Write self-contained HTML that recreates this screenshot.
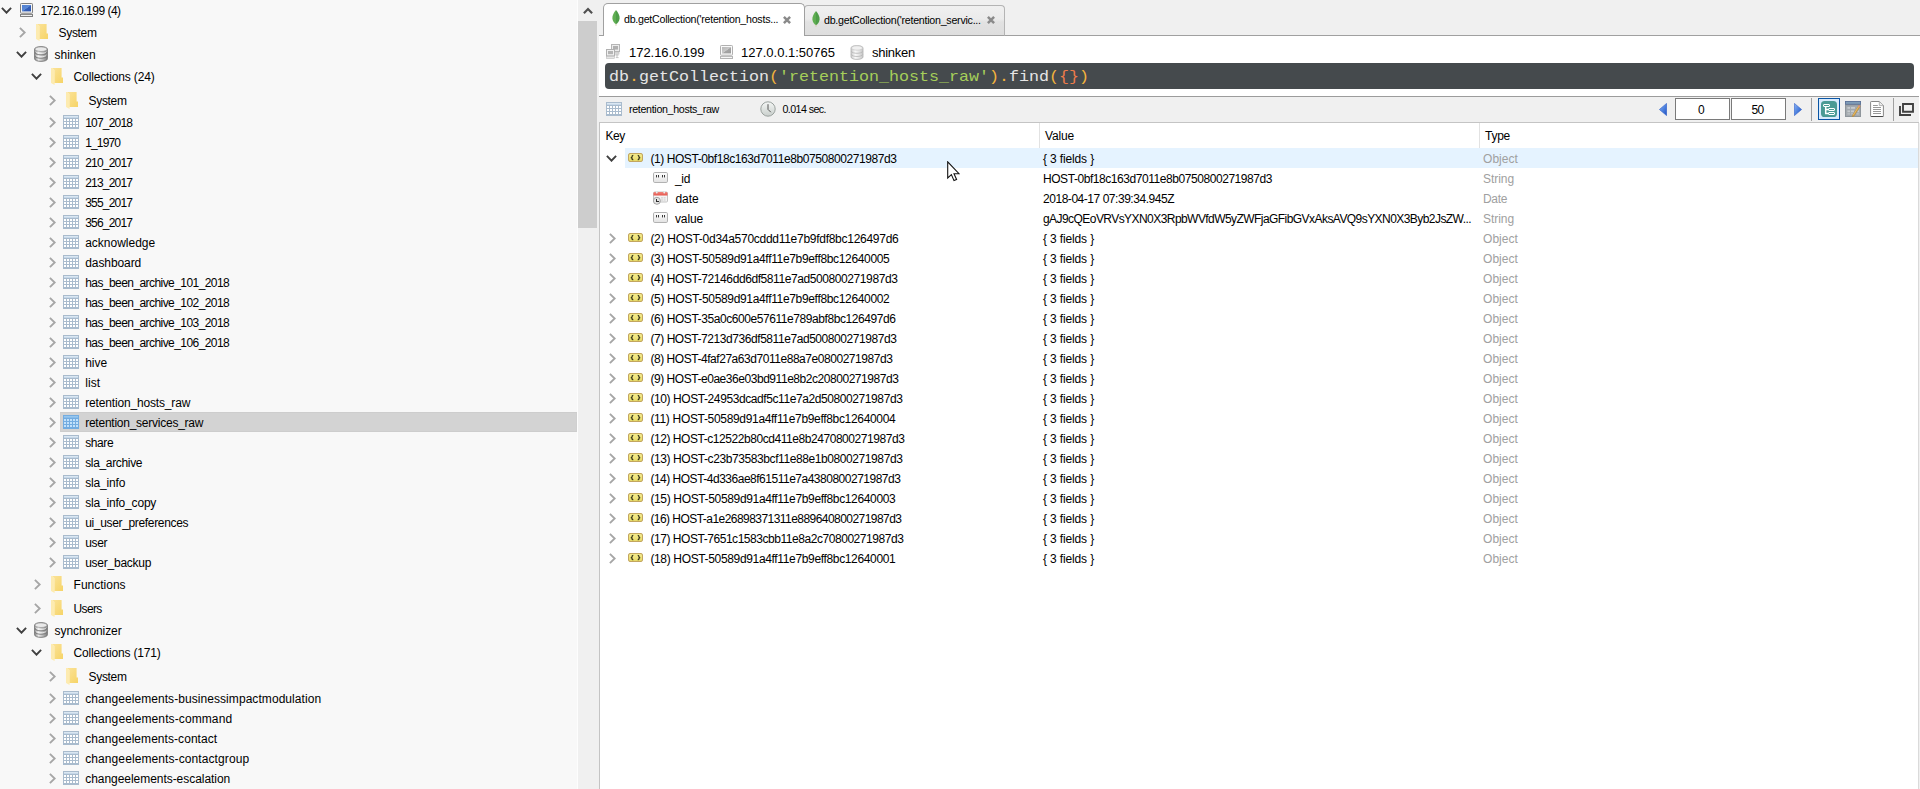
<!DOCTYPE html>
<html><head><meta charset="utf-8"><title>Robo 3T</title>
<style>
html,body{margin:0;padding:0;}
body{width:1920px;height:789px;overflow:hidden;position:relative;background:#fff;font-family:"Liberation Sans",sans-serif;}
.t{position:absolute;white-space:pre;line-height:20px;height:20px;font-family:"Liberation Sans",sans-serif;}
.m{font-family:"Liberation Mono",monospace;}
.b{position:absolute;box-sizing:border-box;}
.i{position:absolute;overflow:visible;}
</style></head><body>

<svg width="0" height="0" style="position:absolute">
<defs>
<linearGradient id="gFold" x1="0" y1="0" x2="1" y2="1"><stop offset="0" stop-color="#fbe39a"/><stop offset="1" stop-color="#f6d467"/></linearGradient>
<linearGradient id="gDb" x1="0" y1="0" x2="1" y2="0"><stop offset="0" stop-color="#7e7e7e"/><stop offset="0.3" stop-color="#ececec"/><stop offset="0.65" stop-color="#b8b8b8"/><stop offset="1" stop-color="#787878"/></linearGradient>
<linearGradient id="gDbL" x1="0" y1="0" x2="1" y2="0"><stop offset="0" stop-color="#c8c8c8"/><stop offset="0.35" stop-color="#fafafa"/><stop offset="0.7" stop-color="#e2e2e2"/><stop offset="1" stop-color="#c4c4c4"/></linearGradient>
<linearGradient id="gScr" x1="0" y1="0" x2="1" y2="1"><stop offset="0" stop-color="#4f7fd0"/><stop offset="0.5" stop-color="#5c8ad6"/><stop offset="0.55" stop-color="#3560b8"/><stop offset="1" stop-color="#2c55ad"/></linearGradient>
<linearGradient id="gScrG" x1="0" y1="0" x2="1" y2="1"><stop offset="0" stop-color="#b8b8b8"/><stop offset="0.5" stop-color="#c8c8c8"/><stop offset="0.55" stop-color="#a4a4a4"/><stop offset="1" stop-color="#9c9c9c"/></linearGradient>
<linearGradient id="gLeaf" x1="0" y1="0" x2="1" y2="0"><stop offset="0" stop-color="#62b052"/><stop offset="0.48" stop-color="#5cab50"/><stop offset="0.52" stop-color="#4c9c47"/><stop offset="1" stop-color="#4fa049"/></linearGradient>
<linearGradient id="gObj" x1="0" y1="0" x2="0" y2="1"><stop offset="0" stop-color="#f3ea8c"/><stop offset="0.5" stop-color="#efe47c"/><stop offset="1" stop-color="#e6d862"/></linearGradient>
<linearGradient id="gStr" x1="0" y1="0" x2="0" y2="1"><stop offset="0" stop-color="#ffffff"/><stop offset="1" stop-color="#e2e2e2"/></linearGradient>
<linearGradient id="gTri" x1="0" y1="0" x2="1" y2="1"><stop offset="0" stop-color="#8db4f2"/><stop offset="0.5" stop-color="#4f83e0"/><stop offset="1" stop-color="#1f4fc0"/></linearGradient>
<linearGradient id="gRed" x1="0" y1="0" x2="0" y2="1"><stop offset="0" stop-color="#f2857c"/><stop offset="1" stop-color="#e6544b"/></linearGradient>
<linearGradient id="gClk" x1="0" y1="0" x2="0" y2="1"><stop offset="0" stop-color="#f4f6f5"/><stop offset="1" stop-color="#c9cfcc"/></linearGradient>

<symbol id="chd" viewBox="0 0 11 7"><path d="M0.9,0.9 L5.5,5.7 L10.1,0.9" fill="none" stroke="#404040" stroke-width="1.9"/></symbol>
<symbol id="chr" viewBox="0 0 7 11"><path d="M0.9,0.9 L5.7,5.5 L0.9,10.1" fill="none" stroke="#a6a6a6" stroke-width="1.9"/></symbol>

<symbol id="comp" viewBox="0 0 13 14">
<rect x="0.5" y="0.5" width="12" height="9.7" rx="0.8" fill="#f6f6f6" stroke="#7e7e7e"/>
<rect x="2" y="2" width="9" height="6.4" fill="url(#gScr)"/>
<rect x="0.5" y="11.4" width="12" height="2.1" fill="#f0f0f0" stroke="#7e7e7e"/>
</symbol>
<symbol id="compg" viewBox="0 0 13 14">
<rect x="0.5" y="0.5" width="12" height="9.7" rx="0.8" fill="#fafafa" stroke="#b0b0b0"/>
<rect x="2" y="2" width="9" height="6.4" fill="url(#gScrG)"/>
<rect x="0.5" y="11.4" width="12" height="2.1" fill="#f6f6f6" stroke="#b4b4b4"/>
</symbol>

<symbol id="db" viewBox="0 0 14 16">
<path d="M0.6,3.2 C0.6,-0.2 13.4,-0.2 13.4,3.2 L13.4,12.8 C13.4,16.2 0.6,16.2 0.6,12.8 Z" fill="url(#gDb)" stroke="#777" stroke-width="0.9"/>
<ellipse cx="7" cy="3.2" rx="6" ry="2.3" fill="#e9e9e9" stroke="#8a8a8a" stroke-width="0.6"/>
<path d="M0.8,6.6 C2,9.6 12,9.6 13.2,6.6" fill="none" stroke="#7a7a7a" stroke-width="0.9"/>
<path d="M0.8,10 C2,13 12,13 13.2,10" fill="none" stroke="#7a7a7a" stroke-width="0.9"/>
<path d="M1.6,5.6 C3,8 11,8 12.4,5.6" fill="none" stroke="#fafafa" stroke-width="0.8" opacity="0.9"/>
<path d="M1.6,9 C3,11.4 11,11.4 12.4,9" fill="none" stroke="#fafafa" stroke-width="0.8" opacity="0.9"/>
</symbol>
<symbol id="dbl" viewBox="0 0 14 16">
<path d="M0.6,3.2 C0.6,-0.2 13.4,-0.2 13.4,3.2 L13.4,12.8 C13.4,16.2 0.6,16.2 0.6,12.8 Z" fill="url(#gDbL)" stroke="#b4b4b4" stroke-width="0.9"/>
<ellipse cx="7" cy="3.2" rx="6" ry="2.3" fill="#f0f0f0" stroke="#c0c0c0" stroke-width="0.6"/>
<path d="M0.8,6.6 C2,9.6 12,9.6 13.2,6.6" fill="none" stroke="#b8b8b8" stroke-width="0.9"/>
<path d="M0.8,10 C2,13 12,13 13.2,10" fill="none" stroke="#b8b8b8" stroke-width="0.9"/>
</symbol>

<symbol id="fold" viewBox="0 0 12 17">
<path d="M0.6,0 L9.4,0 L9.4,0 L10.6,0 L10.6,9.4 L12,9.4 L12,15 L3.2,15 L3.2,2 Z" fill="url(#gFold)"/>
<path d="M0,0 L0.8,0 L3.6,1.9 L3.6,17 L0,15 Z" fill="#fdebb0"/>
</symbol>

<symbol id="tbl" viewBox="0 0 16 14">
<rect x="0" y="0" width="16" height="14" fill="#a9bbcd"/>
<rect x="1" y="1" width="14" height="1" fill="#dbe7f2"/>
<rect x="1" y="2" width="14" height="1" fill="#c6d8e9"/>
<g fill="#fff">
<rect x="1" y="4" width="2" height="2"/><rect x="4" y="4" width="2" height="2"/><rect x="7" y="4" width="2" height="2"/><rect x="10" y="4" width="2" height="2"/><rect x="13" y="4" width="2" height="2"/>
<rect x="1" y="7" width="2" height="2"/><rect x="4" y="7" width="2" height="2"/><rect x="7" y="7" width="2" height="2"/><rect x="10" y="7" width="2" height="2"/><rect x="13" y="7" width="2" height="2"/>
<rect x="1" y="10" width="2" height="2"/><rect x="4" y="10" width="2" height="2"/><rect x="7" y="10" width="2" height="2"/><rect x="10" y="10" width="2" height="2"/><rect x="13" y="10" width="2" height="2"/>
</g>
</symbol>
<symbol id="tbls" viewBox="0 0 16 14">
<rect x="0" y="0" width="16" height="14" fill="#73ace0"/>
<rect x="1" y="1" width="14" height="1" fill="#97c6ee"/>
<rect x="1" y="2" width="14" height="1" fill="#88bce9"/>
<g fill="#c2e1fb">
<rect x="1" y="4" width="2" height="2"/><rect x="4" y="4" width="2" height="2"/><rect x="7" y="4" width="2" height="2"/><rect x="10" y="4" width="2" height="2"/><rect x="13" y="4" width="2" height="2"/>
<rect x="1" y="7" width="2" height="2"/><rect x="4" y="7" width="2" height="2"/><rect x="7" y="7" width="2" height="2"/><rect x="10" y="7" width="2" height="2"/><rect x="13" y="7" width="2" height="2"/>
<rect x="1" y="10" width="2" height="2"/><rect x="4" y="10" width="2" height="2"/><rect x="7" y="10" width="2" height="2"/><rect x="10" y="10" width="2" height="2"/><rect x="13" y="10" width="2" height="2"/>
</g>
</symbol>

<symbol id="leaf" viewBox="0 0 8 16">
<path d="M4,0 C6.2,2.8 8,5.4 7.6,8.8 C7.2,11.8 5.4,13.4 4,14.2 C2.6,13.4 0.8,11.8 0.4,8.8 C0,5.4 1.8,2.8 4,0 Z" fill="url(#gLeaf)"/>
<rect x="3.6" y="13.6" width="0.8" height="2.2" fill="#cfc3a4"/>
</symbol>

<symbol id="cls" viewBox="0 0 8 8"><path d="M0.9,0.9 L7.1,7.1 M7.1,0.9 L0.9,7.1" stroke="#8a8a8a" stroke-width="2.5" fill="none"/></symbol>

<symbol id="obj" viewBox="0 0 15 9">
<path d="M1.3,0.5 L13.7,0.5 L13.7,1.4 L14.5,1.4 L14.5,7.6 L13.7,7.6 L13.7,8.5 L1.3,8.5 L1.3,7.6 L0.5,7.6 L0.5,1.4 L1.3,1.4 Z" fill="url(#gObj)" stroke="#c3a660"/>
<path d="M5.3,2.5 Q4.1,2.4 4.1,3.3 L4.1,3.7 Q4.1,4.5 2.8,4.6 Q4.1,4.7 4.1,5.5 L4.1,5.9 Q4.1,6.8 5.3,6.7" fill="none" stroke="#39381a" stroke-width="1.25"/>
<path d="M9.7,2.5 Q10.9,2.4 10.9,3.3 L10.9,3.7 Q10.9,4.5 12.2,4.6 Q10.9,4.7 10.9,5.5 L10.9,5.9 Q10.9,6.8 9.7,6.7" fill="none" stroke="#39381a" stroke-width="1.25"/>
</symbol>

<symbol id="str" viewBox="0 0 15 11">
<rect x="0.5" y="0.5" width="14" height="10" rx="1.3" fill="url(#gStr)" stroke="#b2b2b2"/>
<g fill="#3a3a3a"><rect x="3" y="3" width="1" height="2.4"/><rect x="5" y="3" width="1" height="2.4"/><rect x="9" y="3" width="1" height="2.4"/><rect x="11" y="3" width="1" height="2.4"/></g>
</symbol>

<symbol id="dat" viewBox="0 0 15 14">
<rect x="0.5" y="1" width="14" height="10" rx="1" fill="#f4f4f4" stroke="#c4c4c4"/>
<path d="M0.5,4.6 L0.5,2.2 Q0.5,1 1.7,1 L13.3,1 Q14.5,1 14.5,2.2 L14.5,4.6 Z" fill="url(#gRed)"/>
<rect x="3" y="0" width="1.6" height="2.4" rx="0.8" fill="#fafafa" stroke="#c8c8c8" stroke-width="0.4"/>
<rect x="10.4" y="0" width="1.6" height="2.4" rx="0.8" fill="#fafafa" stroke="#c8c8c8" stroke-width="0.4"/>
<g fill="#dadada"><rect x="8" y="6" width="2" height="1.6"/><rect x="10.6" y="6" width="2" height="1.6"/><rect x="8" y="8.2" width="2" height="1.6"/><rect x="10.6" y="8.2" width="2" height="1.6"/></g>
<circle cx="3.9" cy="9.8" r="3.5" fill="#e4e4e4" stroke="#9c9c9c" stroke-width="0.9"/>
<rect x="3" y="8" width="1" height="3" fill="#2c2c2c"/><rect x="3" y="10" width="3" height="1" fill="#2c2c2c"/>
</symbol>

<symbol id="clk" viewBox="0 0 16 16">
<circle cx="8" cy="8" r="7.2" fill="url(#gClk)" stroke="#9aa19e" stroke-width="1"/>
<path d="M8,3.2 L8,8.4 L10.8,11.2" fill="none" stroke="#555" stroke-width="1"/>
</symbol>

<symbol id="conn" viewBox="0 0 14 15">
<rect x="5.5" y="0.5" width="8" height="7" fill="#ececec" stroke="#b6b6b6"/>
<rect x="7" y="2" width="5" height="3.6" fill="#b0b0b0"/>
<rect x="6" y="8.5" width="7" height="1.6" fill="#e2e2e2" stroke="#bcbcbc" stroke-width="0.6"/>
<rect x="0.5" y="5.5" width="8" height="6.4" fill="#f0f0f0" stroke="#b0b0b0"/>
<rect x="2" y="7" width="5" height="3.2" fill="#b4b4b4"/>
<rect x="0.5" y="12.6" width="8" height="1.8" fill="#e6e6e6" stroke="#bcbcbc" stroke-width="0.6"/>
<path d="M9.4,11 L12.6,11 M11,9.6 L11,13.6 M9.8,13.6 L12.6,13.6" stroke="#c4c4c4" stroke-width="1" fill="none"/>
</symbol>

<symbol id="tril" viewBox="0 0 8 13"><path d="M7.6,0.4 L7.6,12.6 L0.4,6.5 Z" fill="url(#gTri)" stroke="#2c5cc8" stroke-width="0.6"/></symbol>
<symbol id="trir" viewBox="0 0 8 13"><path d="M0.4,0.4 L0.4,12.6 L7.6,6.5 Z" fill="url(#gTri)" stroke="#2c5cc8" stroke-width="0.6"/></symbol>

<symbol id="tree" viewBox="0 0 16 16">
<rect x="0" y="0" width="16" height="16" rx="3.6" fill="#4a9a95"/>
<g fill="none" stroke="#fff" stroke-width="1">
<rect x="2.5" y="3.5" width="6" height="2" rx="0.5"/>
<rect x="7.5" y="7.5" width="6" height="2" rx="0.5"/>
<rect x="7.5" y="11.5" width="6" height="2" rx="0.5"/>
</g>
<path d="M4.7,6 L4.7,12.6 L7.2,12.6 M4.7,8.5 L7.2,8.5" fill="none" stroke="#fff" stroke-width="1.5"/>
</symbol>

<symbol id="tedit" viewBox="0 0 16 16">
<rect x="0" y="0" width="16" height="16" fill="#8f969c"/>
<rect x="0" y="0" width="16" height="3.6" fill="#5b7096"/>
<rect x="0.8" y="0.8" width="14.4" height="2" fill="#7f9db8"/>
<rect x="1" y="4.4" width="14" height="10.6" fill="#a3a9ae"/>
<g fill="#c6cace"><rect x="2.4" y="6" width="2.6" height="1.8"/><rect x="6" y="6" width="4" height="1.8"/><rect x="2.4" y="9.4" width="2.6" height="1.8"/><rect x="6" y="9.4" width="3" height="1.8"/><rect x="2.4" y="12.4" width="2.6" height="1"/><rect x="6" y="12.4" width="2" height="1"/><rect x="11.4" y="12.4" width="2.4" height="1"/><rect x="12.4" y="9.4" width="1.6" height="1.8"/></g>
<path d="M13.9,4.3 L15.3,5.3 L9,15 L7.4,15.9 L7.7,14 Z" fill="#d9a440" stroke="#a87a30" stroke-width="0.4"/>
<path d="M14.2,4.6 L8.2,14.2" stroke="#f0cc7c" stroke-width="0.6" fill="none"/>
<path d="M13.9,4.3 L15.3,5.3 L14.6,6.4 L13.2,5.4 Z" fill="#e08a86"/>
</symbol>

<symbol id="doc" viewBox="0 0 14 16">
<path d="M0.6,1.2 Q0.6,0.5 1.3,0.5 L9.3,0.5 L13.4,4.6 L13.4,14.8 Q13.4,15.5 12.7,15.5 L1.3,15.5 Q0.6,15.5 0.6,14.8 Z" fill="#fff" stroke="#7a7a7a" stroke-width="0.9"/>
<path d="M0.8,15 Q1,15.6 1.6,15.6 L12.4,15.6 Q13.2,15.6 13.3,15" fill="none" stroke="#3c3c3c" stroke-width="0.9"/>
<path d="M9.3,0.8 L9.3,4.6 L13.2,4.6" fill="#ececec" stroke="#9a9a9a" stroke-width="0.7"/>
<g stroke="#8c8c8c" stroke-width="0.9"><path d="M3,4.5 L7.8,4.5 M3,6.5 L11,6.5 M3,8.5 L11,8.5 M3,10.5 L11,10.5 M3,12.5 L11,12.5"/></g>
</symbol>

<symbol id="win" viewBox="0 0 16 13">
<path d="M4,1 L14,1 L14,8.8 L4,8.8 Z" fill="none" stroke="#404040" stroke-width="1.9"/>
<path d="M1,3 L1,12 L12,12" fill="none" stroke="#404040" stroke-width="1.9"/>
</symbol>

<symbol id="cur" viewBox="0 0 13 21"><path d="M0.7,0.8 L0.7,17 L4.4,13.6 L7,19.6 L9.6,18.5 L7,12.7 L12,12.7 Z" fill="#fff" stroke="#111" stroke-width="1.1" stroke-linejoin="miter"/></symbol>
</defs></svg>

<div class="b" style="left:0px;top:0px;width:578px;height:789px;background:#f8f8f8;"></div>
<div class="b" style="left:577px;top:0px;width:1px;height:789px;background:#fdfdfd;"></div>
<div class="b" style="left:578px;top:0px;width:19px;height:789px;background:#f0f0f0;"></div>
<div class="b" style="left:578px;top:21px;width:19px;height:207px;background:#cdcdcd;"></div>
<svg class="i" style="left:582.5px;top:6.6px" width="10" height="8" viewBox="0 0 10 8"><path d="M0.9,6.3 L5,2 L9.1,6.3" fill="none" stroke="#505050" stroke-width="2.1"/></svg>
<div class="b" style="left:597px;top:0px;width:2px;height:789px;background:#f0f0f0;"></div>
<svg class="i" style="left:1px;top:6.8px" width="11" height="7" ><use href="#chd"/></svg>
<svg class="i" style="left:20px;top:3px" width="13" height="14" ><use href="#comp"/></svg>
<div class="t " style="left:40.60px;top:0.54px;font-size:12px;letter-spacing:-0.504px;color:#000;">172.16.0.199 (4)</div>
<svg class="i" style="left:19px;top:26.9px" width="7" height="11" ><use href="#chr"/></svg>
<svg class="i" style="left:36px;top:23.8px" width="12" height="17" ><use href="#fold"/></svg>
<div class="t " style="left:58.60px;top:22.54px;font-size:12px;letter-spacing:-0.334px;color:#000;">System</div>
<svg class="i" style="left:16px;top:50.8px" width="11" height="7" ><use href="#chd"/></svg>
<svg class="i" style="left:34px;top:45.8px" width="14" height="16" ><use href="#db"/></svg>
<div class="t " style="left:54.60px;top:44.54px;font-size:12px;letter-spacing:-0.051px;color:#000;">shinken</div>
<svg class="i" style="left:31px;top:72.8px" width="11" height="7" ><use href="#chd"/></svg>
<svg class="i" style="left:51px;top:67.8px" width="12" height="17" ><use href="#fold"/></svg>
<div class="t " style="left:73.60px;top:66.54px;font-size:12px;letter-spacing:-0.148px;color:#000;">Collections (24)</div>
<svg class="i" style="left:49px;top:94.9px" width="7" height="11" ><use href="#chr"/></svg>
<svg class="i" style="left:66px;top:91.8px" width="12" height="17" ><use href="#fold"/></svg>
<div class="t " style="left:88.60px;top:90.54px;font-size:12px;letter-spacing:-0.334px;color:#000;">System</div>
<svg class="i" style="left:49px;top:116.9px" width="7" height="11" ><use href="#chr"/></svg>
<svg class="i" style="left:63px;top:115px" width="16" height="14" ><use href="#tbl"/></svg>
<div class="t " style="left:85.20px;top:112.54px;font-size:12px;letter-spacing:-0.798px;color:#000;">107_2018</div>
<svg class="i" style="left:49px;top:136.9px" width="7" height="11" ><use href="#chr"/></svg>
<svg class="i" style="left:63px;top:135px" width="16" height="14" ><use href="#tbl"/></svg>
<div class="t " style="left:85.20px;top:132.54px;font-size:12px;letter-spacing:-0.840px;color:#000;">1_1970</div>
<svg class="i" style="left:49px;top:156.9px" width="7" height="11" ><use href="#chr"/></svg>
<svg class="i" style="left:63px;top:155px" width="16" height="14" ><use href="#tbl"/></svg>
<div class="t " style="left:85.20px;top:152.54px;font-size:12px;letter-spacing:-0.798px;color:#000;">210_2017</div>
<svg class="i" style="left:49px;top:176.9px" width="7" height="11" ><use href="#chr"/></svg>
<svg class="i" style="left:63px;top:175px" width="16" height="14" ><use href="#tbl"/></svg>
<div class="t " style="left:85.20px;top:172.54px;font-size:12px;letter-spacing:-0.798px;color:#000;">213_2017</div>
<svg class="i" style="left:49px;top:196.9px" width="7" height="11" ><use href="#chr"/></svg>
<svg class="i" style="left:63px;top:195px" width="16" height="14" ><use href="#tbl"/></svg>
<div class="t " style="left:85.20px;top:192.54px;font-size:12px;letter-spacing:-0.798px;color:#000;">355_2017</div>
<svg class="i" style="left:49px;top:216.9px" width="7" height="11" ><use href="#chr"/></svg>
<svg class="i" style="left:63px;top:215px" width="16" height="14" ><use href="#tbl"/></svg>
<div class="t " style="left:85.20px;top:212.54px;font-size:12px;letter-spacing:-0.798px;color:#000;">356_2017</div>
<svg class="i" style="left:49px;top:236.9px" width="7" height="11" ><use href="#chr"/></svg>
<svg class="i" style="left:63px;top:235px" width="16" height="14" ><use href="#tbl"/></svg>
<div class="t " style="left:85.20px;top:232.54px;font-size:12px;letter-spacing:-0.004px;color:#000;">acknowledge</div>
<svg class="i" style="left:49px;top:256.9px" width="7" height="11" ><use href="#chr"/></svg>
<svg class="i" style="left:63px;top:255px" width="16" height="14" ><use href="#tbl"/></svg>
<div class="t " style="left:85.20px;top:252.54px;font-size:12px;letter-spacing:-0.079px;color:#000;">dashboard</div>
<svg class="i" style="left:49px;top:276.9px" width="7" height="11" ><use href="#chr"/></svg>
<svg class="i" style="left:63px;top:275px" width="16" height="14" ><use href="#tbl"/></svg>
<div class="t " style="left:85.20px;top:272.54px;font-size:12px;letter-spacing:-0.565px;color:#000;">has_been_archive_101_2018</div>
<svg class="i" style="left:49px;top:296.9px" width="7" height="11" ><use href="#chr"/></svg>
<svg class="i" style="left:63px;top:295px" width="16" height="14" ><use href="#tbl"/></svg>
<div class="t " style="left:85.20px;top:292.54px;font-size:12px;letter-spacing:-0.565px;color:#000;">has_been_archive_102_2018</div>
<svg class="i" style="left:49px;top:316.9px" width="7" height="11" ><use href="#chr"/></svg>
<svg class="i" style="left:63px;top:315px" width="16" height="14" ><use href="#tbl"/></svg>
<div class="t " style="left:85.20px;top:312.54px;font-size:12px;letter-spacing:-0.565px;color:#000;">has_been_archive_103_2018</div>
<svg class="i" style="left:49px;top:336.9px" width="7" height="11" ><use href="#chr"/></svg>
<svg class="i" style="left:63px;top:335px" width="16" height="14" ><use href="#tbl"/></svg>
<div class="t " style="left:85.20px;top:332.54px;font-size:12px;letter-spacing:-0.565px;color:#000;">has_been_archive_106_2018</div>
<svg class="i" style="left:49px;top:356.9px" width="7" height="11" ><use href="#chr"/></svg>
<svg class="i" style="left:63px;top:355px" width="16" height="14" ><use href="#tbl"/></svg>
<div class="t " style="left:85.20px;top:352.54px;font-size:12px;letter-spacing:-0.003px;color:#000;">hive</div>
<svg class="i" style="left:49px;top:376.9px" width="7" height="11" ><use href="#chr"/></svg>
<svg class="i" style="left:63px;top:375px" width="16" height="14" ><use href="#tbl"/></svg>
<div class="t " style="left:85.20px;top:372.54px;font-size:12px;letter-spacing:0.083px;color:#000;">list</div>
<svg class="i" style="left:49px;top:396.9px" width="7" height="11" ><use href="#chr"/></svg>
<svg class="i" style="left:63px;top:395px" width="16" height="14" ><use href="#tbl"/></svg>
<div class="t " style="left:85.20px;top:392.54px;font-size:12px;letter-spacing:-0.161px;color:#000;">retention_hosts_raw</div>
<div class="b" style="left:60px;top:412px;width:517px;height:20px;background:#d3d3d3;border:1px solid #cdcdcd;border-left-color:#d0d0d0;border-right-color:#d0d0d0;"></div>
<svg class="i" style="left:49px;top:416.9px" width="7" height="11" ><use href="#chr"/></svg>
<svg class="i" style="left:63px;top:415px" width="16" height="14" ><use href="#tbls"/></svg>
<div class="t " style="left:85.20px;top:412.54px;font-size:12px;letter-spacing:-0.245px;color:#000;">retention_services_raw</div>
<svg class="i" style="left:49px;top:436.9px" width="7" height="11" ><use href="#chr"/></svg>
<svg class="i" style="left:63px;top:435px" width="16" height="14" ><use href="#tbl"/></svg>
<div class="t " style="left:85.20px;top:432.54px;font-size:12px;letter-spacing:-0.403px;color:#000;">share</div>
<svg class="i" style="left:49px;top:456.9px" width="7" height="11" ><use href="#chr"/></svg>
<svg class="i" style="left:63px;top:455px" width="16" height="14" ><use href="#tbl"/></svg>
<div class="t " style="left:85.20px;top:452.54px;font-size:12px;letter-spacing:-0.336px;color:#000;">sla_archive</div>
<svg class="i" style="left:49px;top:476.9px" width="7" height="11" ><use href="#chr"/></svg>
<svg class="i" style="left:63px;top:475px" width="16" height="14" ><use href="#tbl"/></svg>
<div class="t " style="left:85.20px;top:472.54px;font-size:12px;letter-spacing:-0.170px;color:#000;">sla_info</div>
<svg class="i" style="left:49px;top:496.9px" width="7" height="11" ><use href="#chr"/></svg>
<svg class="i" style="left:63px;top:495px" width="16" height="14" ><use href="#tbl"/></svg>
<div class="t " style="left:85.20px;top:492.54px;font-size:12px;letter-spacing:-0.183px;color:#000;">sla_info_copy</div>
<svg class="i" style="left:49px;top:516.9px" width="7" height="11" ><use href="#chr"/></svg>
<svg class="i" style="left:63px;top:515px" width="16" height="14" ><use href="#tbl"/></svg>
<div class="t " style="left:85.20px;top:512.54px;font-size:12px;letter-spacing:-0.336px;color:#000;">ui_user_preferences</div>
<svg class="i" style="left:49px;top:536.9px" width="7" height="11" ><use href="#chr"/></svg>
<svg class="i" style="left:63px;top:535px" width="16" height="14" ><use href="#tbl"/></svg>
<div class="t " style="left:85.20px;top:532.54px;font-size:12px;letter-spacing:-0.335px;color:#000;">user</div>
<svg class="i" style="left:49px;top:556.9px" width="7" height="11" ><use href="#chr"/></svg>
<svg class="i" style="left:63px;top:555px" width="16" height="14" ><use href="#tbl"/></svg>
<div class="t " style="left:85.20px;top:552.54px;font-size:12px;letter-spacing:-0.246px;color:#000;">user_backup</div>
<svg class="i" style="left:34px;top:578.9px" width="7" height="11" ><use href="#chr"/></svg>
<svg class="i" style="left:51px;top:575.8px" width="12" height="17" ><use href="#fold"/></svg>
<div class="t " style="left:73.60px;top:574.54px;font-size:12px;letter-spacing:-0.002px;color:#000;">Functions</div>
<svg class="i" style="left:34px;top:602.9px" width="7" height="11" ><use href="#chr"/></svg>
<svg class="i" style="left:51px;top:599.8px" width="12" height="17" ><use href="#fold"/></svg>
<div class="t " style="left:73.60px;top:598.54px;font-size:12px;letter-spacing:-0.667px;color:#000;">Users</div>
<svg class="i" style="left:16px;top:626.8px" width="11" height="7" ><use href="#chd"/></svg>
<svg class="i" style="left:34px;top:621.8px" width="14" height="16" ><use href="#db"/></svg>
<div class="t " style="left:54.60px;top:620.54px;font-size:12px;letter-spacing:-0.085px;color:#000;">synchronizer</div>
<svg class="i" style="left:31px;top:648.8px" width="11" height="7" ><use href="#chd"/></svg>
<svg class="i" style="left:51px;top:643.8px" width="12" height="17" ><use href="#fold"/></svg>
<div class="t " style="left:73.60px;top:642.54px;font-size:12px;letter-spacing:-0.179px;color:#000;">Collections (171)</div>
<svg class="i" style="left:49px;top:670.9px" width="7" height="11" ><use href="#chr"/></svg>
<svg class="i" style="left:66px;top:667.8px" width="12" height="17" ><use href="#fold"/></svg>
<div class="t " style="left:88.60px;top:666.54px;font-size:12px;letter-spacing:-0.334px;color:#000;">System</div>
<svg class="i" style="left:49px;top:692.9px" width="7" height="11" ><use href="#chr"/></svg>
<svg class="i" style="left:63px;top:691px" width="16" height="14" ><use href="#tbl"/></svg>
<div class="t " style="left:85.20px;top:688.54px;font-size:12px;letter-spacing:0.065px;color:#000;">changeelements-businessimpactmodulation</div>
<svg class="i" style="left:49px;top:712.9px" width="7" height="11" ><use href="#chr"/></svg>
<svg class="i" style="left:63px;top:711px" width="16" height="14" ><use href="#tbl"/></svg>
<div class="t " style="left:85.20px;top:708.54px;font-size:12px;letter-spacing:0.103px;color:#000;">changeelements-command</div>
<svg class="i" style="left:49px;top:732.9px" width="7" height="11" ><use href="#chr"/></svg>
<svg class="i" style="left:63px;top:731px" width="16" height="14" ><use href="#tbl"/></svg>
<div class="t " style="left:85.20px;top:728.54px;font-size:12px;letter-spacing:0.057px;color:#000;">changeelements-contact</div>
<svg class="i" style="left:49px;top:752.9px" width="7" height="11" ><use href="#chr"/></svg>
<svg class="i" style="left:63px;top:751px" width="16" height="14" ><use href="#tbl"/></svg>
<div class="t " style="left:85.20px;top:748.54px;font-size:12px;letter-spacing:0.095px;color:#000;">changeelements-contactgroup</div>
<svg class="i" style="left:49px;top:772.9px" width="7" height="11" ><use href="#chr"/></svg>
<svg class="i" style="left:63px;top:771px" width="16" height="14" ><use href="#tbl"/></svg>
<div class="t " style="left:85.20px;top:768.54px;font-size:12px;letter-spacing:-0.043px;color:#000;">changeelements-escalation</div>
<div class="b" style="left:599px;top:0px;width:1321px;height:36px;background:#f0f0f0;"></div>
<div class="b" style="left:599px;top:35px;width:1321px;height:1px;background:#a0a0a0;"></div>
<div class="b" style="left:599px;top:122px;width:1px;height:667px;background:#c4c4c4;"></div>
<div class="b" style="left:804px;top:5px;width:201px;height:31px;background:linear-gradient(#f0f0f0 0%,#ebebeb 45%,#e2e2e2 55%,#dedede 100%);border:1px solid #b4b4b4;border-bottom:1px solid #a0a0a0;border-radius:4px 4px 0 0;"></div>
<div class="b" style="left:603px;top:3px;width:202px;height:33px;background:#fff;border:1px solid #a0a0a0;border-bottom:none;border-radius:5px 5px 0 0;"></div>
<svg class="i" style="left:612px;top:10px" width="8" height="16" ><use href="#leaf"/></svg>
<div class="t " style="left:624.00px;top:9.30px;font-size:10.67px;letter-spacing:-0.263px;color:#000;">db.getCollection(&#x27;retention_hosts...</div>
<svg class="i" style="left:783px;top:16px" width="8" height="8" ><use href="#cls"/></svg>
<svg class="i" style="left:812px;top:11.2px" width="8" height="16" ><use href="#leaf"/></svg>
<div class="t " style="left:824.00px;top:9.70px;font-size:10.67px;letter-spacing:-0.252px;color:#000;">db.getCollection(&#x27;retention_servic...</div>
<svg class="i" style="left:987px;top:16.4px" width="8" height="8" ><use href="#cls"/></svg>
<svg class="i" style="left:606px;top:44px" width="14" height="15" ><use href="#conn"/></svg>
<div class="t " style="left:629.00px;top:42.50px;font-size:13px;letter-spacing:-0.033px;color:#000;">172.16.0.199</div>
<svg class="i" style="left:720px;top:45px" width="13" height="14" ><use href="#compg"/></svg>
<div class="t " style="left:741.00px;top:42.50px;font-size:13px;letter-spacing:0.002px;color:#000;">127.0.0.1:50765</div>
<svg class="i" style="left:850px;top:44.5px" width="14" height="15" ><use href="#dbl"/></svg>
<div class="t " style="left:872.00px;top:42.50px;font-size:13px;letter-spacing:-0.258px;color:#000;">shinken</div>
<div class="b" style="left:605px;top:63.4px;width:1309px;height:25.5px;background:#454a4d;border-radius:4px;"></div>
<div class="t m" style="left:609px;top:67.11px;font-size:14.6px;transform-origin:0 0;transform:scaleX(1.1416);"><span style="color:#e6e6e6">db</span><span style="color:#f2b33d">.</span><span style="color:#e6e6e6">getCollection</span><span style="color:#f2b33d">(</span><span style="color:#a5cf5a">&#x27;retention_hosts_raw&#x27;</span><span style="color:#f2b33d">)</span><span style="color:#f2b33d">.</span><span style="color:#e6e6e6">find</span><span style="color:#f2b33d">(</span><span style="color:#f07c4a">{}</span><span style="color:#f2b33d">)</span></div>
<div class="b" style="left:599px;top:96px;width:1320px;height:27px;background:#f0f0f0;border-top:1px solid #9c9c9c;border-bottom:1px solid #c4c4c4;"></div>
<svg class="i" style="left:606px;top:102px" width="16" height="14" ><use href="#tbl"/></svg>
<div class="t " style="left:629.00px;top:99.10px;font-size:10.67px;letter-spacing:-0.320px;color:#000;">retention_hosts_raw</div>
<svg class="i" style="left:760px;top:101px" width="16" height="16" ><use href="#clk"/></svg>
<div class="t " style="left:782.50px;top:99.10px;font-size:10.67px;letter-spacing:-0.573px;color:#000;">0.014 sec.</div>
<svg class="i" style="left:1658.5px;top:102.5px" width="8" height="13" ><use href="#tril"/></svg>
<div class="b" style="left:1675px;top:98px;width:55px;height:22px;background:#fff;border:1px solid #7a7a7a;"></div>
<div class="b" style="left:1731px;top:98px;width:55px;height:22px;background:#fff;border:1px solid #7a7a7a;"></div>
<div class="t " style="left:1698.00px;top:100.44px;font-size:12px;letter-spacing:-0.673px;color:#000;">0</div>
<div class="t " style="left:1751.50px;top:100.44px;font-size:12px;letter-spacing:-0.673px;color:#000;">50</div>
<svg class="i" style="left:1794px;top:102.5px" width="8" height="13" ><use href="#trir"/></svg>
<div class="b" style="left:1811px;top:98px;width:1px;height:23px;background:#a0a0a0;"></div>
<div class="b" style="left:1818px;top:98px;width:22px;height:22px;background:#d8eafc;border:1px solid #0a55a5;"></div>
<svg class="i" style="left:1821px;top:101px" width="16" height="16" ><use href="#tree"/></svg>
<svg class="i" style="left:1845px;top:101px" width="16" height="16" ><use href="#tedit"/></svg>
<svg class="i" style="left:1870px;top:101px" width="14" height="16" ><use href="#doc"/></svg>
<div class="b" style="left:1893px;top:98px;width:1px;height:23px;background:#a0a0a0;"></div>
<svg class="i" style="left:1899px;top:103px" width="16" height="13" ><use href="#win"/></svg>
<div class="b" style="left:1918px;top:123px;width:1px;height:666px;background:#dadada;"></div>
<div class="b" style="left:1919px;top:123px;width:1px;height:666px;background:#f0f0f0;"></div>
<div class="t " style="left:605.60px;top:125.84px;font-size:12px;letter-spacing:-0.559px;color:#000;">Key</div>
<div class="t " style="left:1045.00px;top:125.84px;font-size:12px;letter-spacing:-0.160px;color:#000;">Value</div>
<div class="t " style="left:1485.00px;top:125.84px;font-size:12px;letter-spacing:-0.253px;color:#000;">Type</div>
<div class="b" style="left:1039px;top:123px;width:1px;height:25px;background:#e2e2e2;"></div>
<div class="b" style="left:1479px;top:123px;width:1px;height:25px;background:#e2e2e2;"></div>
<div class="b" style="left:625px;top:148px;width:1293px;height:20px;background:#e5f3ff;"></div>
<svg class="i" style="left:606px;top:154.8px" width="11" height="7" ><use href="#chd"/></svg>
<svg class="i" style="left:628px;top:153px" width="15" height="9" ><use href="#obj"/></svg>
<div class="t " style="left:650.40px;top:148.84px;font-size:12px;letter-spacing:-0.422px;color:#000;">(1) HOST-0bf18c163d7011e8b0750800271987d3</div>
<div class="t " style="left:1043.00px;top:148.84px;font-size:12px;letter-spacing:-0.142px;color:#000;">{ 3 fields }</div>
<div class="t " style="left:1483.00px;top:148.84px;font-size:12px;letter-spacing:0.053px;color:#a0a0a0;">Object</div>
<svg class="i" style="left:653px;top:172px" width="15" height="11" ><use href="#str"/></svg>
<div class="t " style="left:675.00px;top:168.84px;font-size:12px;letter-spacing:-0.337px;color:#000;">_id</div>
<div class="t " style="left:1043.00px;top:168.84px;font-size:12px;letter-spacing:-0.441px;color:#000;">HOST-0bf18c163d7011e8b0750800271987d3</div>
<div class="t " style="left:1483.00px;top:168.84px;font-size:12px;letter-spacing:-0.058px;color:#a0a0a0;">String</div>
<svg class="i" style="left:653px;top:191px" width="15" height="14" ><use href="#dat"/></svg>
<div class="t " style="left:675.50px;top:188.84px;font-size:12px;letter-spacing:-0.088px;color:#000;">date</div>
<div class="t " style="left:1043.00px;top:188.84px;font-size:12px;letter-spacing:-0.462px;color:#000;">2018-04-17 07:39:34.945Z</div>
<div class="t " style="left:1483.00px;top:188.84px;font-size:12px;letter-spacing:-0.337px;color:#a0a0a0;">Date</div>
<svg class="i" style="left:653px;top:212px" width="15" height="11" ><use href="#str"/></svg>
<div class="t " style="left:675.00px;top:208.84px;font-size:12px;letter-spacing:-0.137px;color:#000;">value</div>
<div class="t " style="left:1043.00px;top:208.84px;font-size:12px;letter-spacing:-0.559px;color:#000;">gAJ9cQEoVRVsYXN0X3RpbWVfdW5yZWFjaGFibGVxAksAVQ9sYXN0X3Byb2JsZW...</div>
<div class="t " style="left:1483.00px;top:208.84px;font-size:12px;letter-spacing:-0.058px;color:#a0a0a0;">String</div>
<svg class="i" style="left:609px;top:232.9px" width="7" height="11" ><use href="#chr"/></svg>
<svg class="i" style="left:628px;top:233px" width="15" height="9" ><use href="#obj"/></svg>
<div class="t " style="left:650.40px;top:228.84px;font-size:12px;letter-spacing:-0.275px;color:#000;">(2) HOST-0d34a570cddd11e7b9fdf8bc126497d6</div>
<div class="t " style="left:1043.00px;top:228.84px;font-size:12px;letter-spacing:-0.142px;color:#000;">{ 3 fields }</div>
<div class="t " style="left:1483.00px;top:228.84px;font-size:12px;letter-spacing:0.053px;color:#a0a0a0;">Object</div>
<svg class="i" style="left:609px;top:252.9px" width="7" height="11" ><use href="#chr"/></svg>
<svg class="i" style="left:628px;top:253px" width="15" height="9" ><use href="#obj"/></svg>
<div class="t " style="left:650.40px;top:248.84px;font-size:12px;letter-spacing:-0.338px;color:#000;">(3) HOST-50589d91a4ff11e7b9eff8bc12640005</div>
<div class="t " style="left:1043.00px;top:248.84px;font-size:12px;letter-spacing:-0.142px;color:#000;">{ 3 fields }</div>
<div class="t " style="left:1483.00px;top:248.84px;font-size:12px;letter-spacing:0.053px;color:#a0a0a0;">Object</div>
<svg class="i" style="left:609px;top:272.9px" width="7" height="11" ><use href="#chr"/></svg>
<svg class="i" style="left:628px;top:273px" width="15" height="9" ><use href="#obj"/></svg>
<div class="t " style="left:650.40px;top:268.84px;font-size:12px;letter-spacing:-0.414px;color:#000;">(4) HOST-72146dd6df5811e7ad500800271987d3</div>
<div class="t " style="left:1043.00px;top:268.84px;font-size:12px;letter-spacing:-0.142px;color:#000;">{ 3 fields }</div>
<div class="t " style="left:1483.00px;top:268.84px;font-size:12px;letter-spacing:0.053px;color:#a0a0a0;">Object</div>
<svg class="i" style="left:609px;top:292.9px" width="7" height="11" ><use href="#chr"/></svg>
<svg class="i" style="left:628px;top:293px" width="15" height="9" ><use href="#obj"/></svg>
<div class="t " style="left:650.40px;top:288.84px;font-size:12px;letter-spacing:-0.338px;color:#000;">(5) HOST-50589d91a4ff11e7b9eff8bc12640002</div>
<div class="t " style="left:1043.00px;top:288.84px;font-size:12px;letter-spacing:-0.142px;color:#000;">{ 3 fields }</div>
<div class="t " style="left:1483.00px;top:288.84px;font-size:12px;letter-spacing:0.053px;color:#a0a0a0;">Object</div>
<svg class="i" style="left:609px;top:312.9px" width="7" height="11" ><use href="#chr"/></svg>
<svg class="i" style="left:628px;top:313px" width="15" height="9" ><use href="#obj"/></svg>
<div class="t " style="left:650.40px;top:308.84px;font-size:12px;letter-spacing:-0.430px;color:#000;">(6) HOST-35a0c600e57611e789abf8bc126497d6</div>
<div class="t " style="left:1043.00px;top:308.84px;font-size:12px;letter-spacing:-0.142px;color:#000;">{ 3 fields }</div>
<div class="t " style="left:1483.00px;top:308.84px;font-size:12px;letter-spacing:0.053px;color:#a0a0a0;">Object</div>
<svg class="i" style="left:609px;top:332.9px" width="7" height="11" ><use href="#chr"/></svg>
<svg class="i" style="left:628px;top:333px" width="15" height="9" ><use href="#obj"/></svg>
<div class="t " style="left:650.40px;top:328.84px;font-size:12px;letter-spacing:-0.438px;color:#000;">(7) HOST-7213d736df5811e7ad500800271987d3</div>
<div class="t " style="left:1043.00px;top:328.84px;font-size:12px;letter-spacing:-0.142px;color:#000;">{ 3 fields }</div>
<div class="t " style="left:1483.00px;top:328.84px;font-size:12px;letter-spacing:0.053px;color:#a0a0a0;">Object</div>
<svg class="i" style="left:609px;top:352.9px" width="7" height="11" ><use href="#chr"/></svg>
<svg class="i" style="left:628px;top:353px" width="15" height="9" ><use href="#obj"/></svg>
<div class="t " style="left:650.40px;top:348.84px;font-size:12px;letter-spacing:-0.455px;color:#000;">(8) HOST-4faf27a63d7011e88a7e0800271987d3</div>
<div class="t " style="left:1043.00px;top:348.84px;font-size:12px;letter-spacing:-0.142px;color:#000;">{ 3 fields }</div>
<div class="t " style="left:1483.00px;top:348.84px;font-size:12px;letter-spacing:0.053px;color:#a0a0a0;">Object</div>
<svg class="i" style="left:609px;top:372.9px" width="7" height="11" ><use href="#chr"/></svg>
<svg class="i" style="left:628px;top:373px" width="15" height="9" ><use href="#obj"/></svg>
<div class="t " style="left:650.40px;top:368.84px;font-size:12px;letter-spacing:-0.455px;color:#000;">(9) HOST-e0ae36e03bd911e8b2c20800271987d3</div>
<div class="t " style="left:1043.00px;top:368.84px;font-size:12px;letter-spacing:-0.142px;color:#000;">{ 3 fields }</div>
<div class="t " style="left:1483.00px;top:368.84px;font-size:12px;letter-spacing:0.053px;color:#a0a0a0;">Object</div>
<svg class="i" style="left:609px;top:392.9px" width="7" height="11" ><use href="#chr"/></svg>
<svg class="i" style="left:628px;top:393px" width="15" height="9" ><use href="#obj"/></svg>
<div class="t " style="left:650.40px;top:388.84px;font-size:12px;letter-spacing:-0.412px;color:#000;">(10) HOST-24953dcadf5c11e7a2d50800271987d3</div>
<div class="t " style="left:1043.00px;top:388.84px;font-size:12px;letter-spacing:-0.142px;color:#000;">{ 3 fields }</div>
<div class="t " style="left:1483.00px;top:388.84px;font-size:12px;letter-spacing:0.053px;color:#a0a0a0;">Object</div>
<svg class="i" style="left:609px;top:412.9px" width="7" height="11" ><use href="#chr"/></svg>
<svg class="i" style="left:628px;top:413px" width="15" height="9" ><use href="#obj"/></svg>
<div class="t " style="left:650.40px;top:408.84px;font-size:12px;letter-spacing:-0.325px;color:#000;">(11) HOST-50589d91a4ff11e7b9eff8bc12640004</div>
<div class="t " style="left:1043.00px;top:408.84px;font-size:12px;letter-spacing:-0.142px;color:#000;">{ 3 fields }</div>
<div class="t " style="left:1483.00px;top:408.84px;font-size:12px;letter-spacing:0.053px;color:#a0a0a0;">Object</div>
<svg class="i" style="left:609px;top:432.9px" width="7" height="11" ><use href="#chr"/></svg>
<svg class="i" style="left:628px;top:433px" width="15" height="9" ><use href="#obj"/></svg>
<div class="t " style="left:650.40px;top:428.84px;font-size:12px;letter-spacing:-0.444px;color:#000;">(12) HOST-c12522b80cd411e8b2470800271987d3</div>
<div class="t " style="left:1043.00px;top:428.84px;font-size:12px;letter-spacing:-0.142px;color:#000;">{ 3 fields }</div>
<div class="t " style="left:1483.00px;top:428.84px;font-size:12px;letter-spacing:0.053px;color:#a0a0a0;">Object</div>
<svg class="i" style="left:609px;top:452.9px" width="7" height="11" ><use href="#chr"/></svg>
<svg class="i" style="left:628px;top:453px" width="15" height="9" ><use href="#obj"/></svg>
<div class="t " style="left:650.40px;top:448.84px;font-size:12px;letter-spacing:-0.412px;color:#000;">(13) HOST-c23b73583bcf11e88e1b0800271987d3</div>
<div class="t " style="left:1043.00px;top:448.84px;font-size:12px;letter-spacing:-0.142px;color:#000;">{ 3 fields }</div>
<div class="t " style="left:1483.00px;top:448.84px;font-size:12px;letter-spacing:0.053px;color:#a0a0a0;">Object</div>
<svg class="i" style="left:609px;top:472.9px" width="7" height="11" ><use href="#chr"/></svg>
<svg class="i" style="left:628px;top:473px" width="15" height="9" ><use href="#obj"/></svg>
<div class="t " style="left:650.40px;top:468.84px;font-size:12px;letter-spacing:-0.492px;color:#000;">(14) HOST-4d336ae8f61511e7a4380800271987d3</div>
<div class="t " style="left:1043.00px;top:468.84px;font-size:12px;letter-spacing:-0.142px;color:#000;">{ 3 fields }</div>
<div class="t " style="left:1483.00px;top:468.84px;font-size:12px;letter-spacing:0.053px;color:#a0a0a0;">Object</div>
<svg class="i" style="left:609px;top:492.9px" width="7" height="11" ><use href="#chr"/></svg>
<svg class="i" style="left:628px;top:493px" width="15" height="9" ><use href="#obj"/></svg>
<div class="t " style="left:650.40px;top:488.84px;font-size:12px;letter-spacing:-0.346px;color:#000;">(15) HOST-50589d91a4ff11e7b9eff8bc12640003</div>
<div class="t " style="left:1043.00px;top:488.84px;font-size:12px;letter-spacing:-0.142px;color:#000;">{ 3 fields }</div>
<div class="t " style="left:1483.00px;top:488.84px;font-size:12px;letter-spacing:0.053px;color:#a0a0a0;">Object</div>
<svg class="i" style="left:609px;top:512.9px" width="7" height="11" ><use href="#chr"/></svg>
<svg class="i" style="left:628px;top:513px" width="15" height="9" ><use href="#obj"/></svg>
<div class="t " style="left:650.40px;top:508.84px;font-size:12px;letter-spacing:-0.547px;color:#000;">(16) HOST-a1e26898371311e889640800271987d3</div>
<div class="t " style="left:1043.00px;top:508.84px;font-size:12px;letter-spacing:-0.142px;color:#000;">{ 3 fields }</div>
<div class="t " style="left:1483.00px;top:508.84px;font-size:12px;letter-spacing:0.053px;color:#a0a0a0;">Object</div>
<svg class="i" style="left:609px;top:532.9px" width="7" height="11" ><use href="#chr"/></svg>
<svg class="i" style="left:628px;top:533px" width="15" height="9" ><use href="#obj"/></svg>
<div class="t " style="left:650.40px;top:528.84px;font-size:12px;letter-spacing:-0.452px;color:#000;">(17) HOST-7651c1583cbb11e8a2c70800271987d3</div>
<div class="t " style="left:1043.00px;top:528.84px;font-size:12px;letter-spacing:-0.142px;color:#000;">{ 3 fields }</div>
<div class="t " style="left:1483.00px;top:528.84px;font-size:12px;letter-spacing:0.053px;color:#a0a0a0;">Object</div>
<svg class="i" style="left:609px;top:552.9px" width="7" height="11" ><use href="#chr"/></svg>
<svg class="i" style="left:628px;top:553px" width="15" height="9" ><use href="#obj"/></svg>
<div class="t " style="left:650.40px;top:548.84px;font-size:12px;letter-spacing:-0.346px;color:#000;">(18) HOST-50589d91a4ff11e7b9eff8bc12640001</div>
<div class="t " style="left:1043.00px;top:548.84px;font-size:12px;letter-spacing:-0.142px;color:#000;">{ 3 fields }</div>
<div class="t " style="left:1483.00px;top:548.84px;font-size:12px;letter-spacing:0.053px;color:#a0a0a0;">Object</div>
<svg class="i" style="left:946.6px;top:161px" width="13" height="21" ><use href="#cur"/></svg>
</body></html>
